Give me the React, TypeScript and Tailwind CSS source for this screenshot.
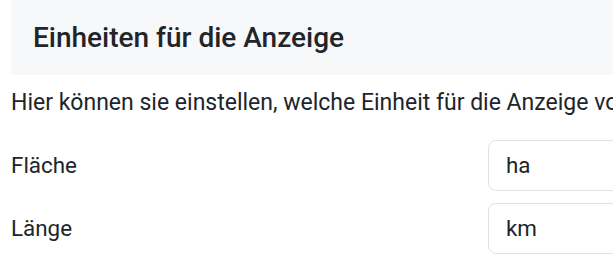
export default function App() {
  return (
    <div className="w-[613px] h-[260px] overflow-hidden bg-white font-['Roboto',sans-serif] text-[#212529]">
      <div className="w-[900px]">
        <div className="ml-[11px] h-[75px] bg-[#f7f8fa] pl-[22px] pt-[21px]">
          <h2 className="text-[28px] font-medium leading-[33px]">Einheiten für die Anzeige</h2>
        </div>
        <p className="mt-[11px] pl-[11px] text-[23px] leading-[33px] whitespace-nowrap">
          Hier können sie einstellen, welche Einheit für die Anzeige von Flächen und Längen verwendet werden soll.
        </p>
        <div className="mt-[21px] flex flex-col gap-[12px] pl-[11px]">
          {[
            { label: "Fläche", value: "ha" },
            { label: "Länge", value: "km" },
          ].map((row) => (
            <div key={row.label} className="flex items-center">
              <span className="w-[477px] text-[22.4px] leading-[33px]">{row.label}</span>
              <div className="h-[51px] w-[300px] rounded-[8px] border border-[#dee2e6] flex items-center px-[17px] text-[22.4px]">
                {row.value}
              </div>
            </div>
          ))}
        </div>
      </div>
    </div>
  )
}
